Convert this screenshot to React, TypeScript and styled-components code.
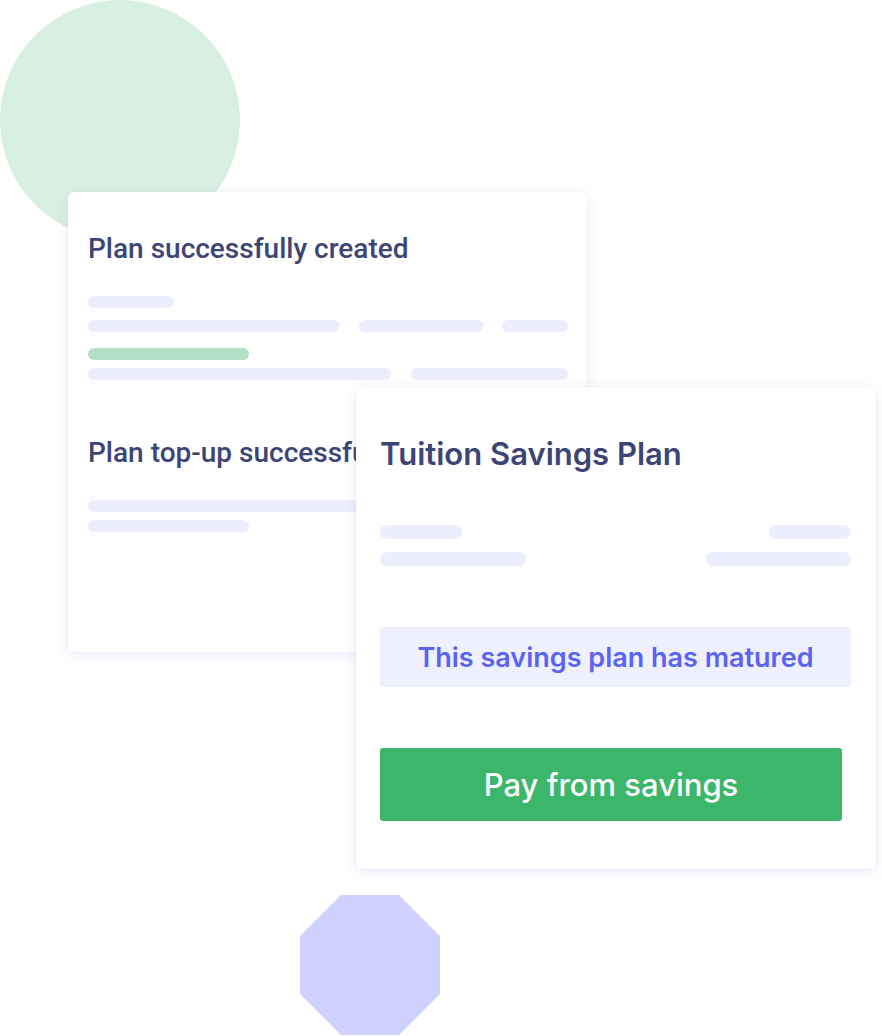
import React from "react";
import styled, { createGlobalStyle } from "styled-components";

const Global = createGlobalStyle`
  html, body { margin: 0; padding: 0; background: #ffffff; }
  * { box-sizing: border-box; }
`;

const Canvas = styled.div`
  position: relative;
  width: 882px;
  height: 1036px;
  overflow: hidden;
  background: #ffffff;
`;

const Circle = styled.div`
  position: absolute;
  left: 0;
  top: 0;
  width: 240px;
  height: 240px;
  border-radius: 50%;
  background: #d8f0e1;
`;

const Octagon = styled.div`
  position: absolute;
  left: 300px;
  top: 895px;
  width: 140px;
  height: 140px;
  background: #d0d1ff;
  clip-path: polygon(29.3% 0, 70.7% 0, 100% 29.3%, 100% 70.7%, 70.7% 100%, 29.3% 100%, 0 70.7%, 0 29.3%);
`;

const Card = styled.div<{ $left: number; $top: number; $w: number; $h: number }>`
  position: absolute;
  left: ${(p) => p.$left}px;
  top: ${(p) => p.$top}px;
  width: ${(p) => p.$w}px;
  height: ${(p) => p.$h}px;
  background: #ffffff;
  border-radius: 6px;
  box-shadow: 0 3px 14px rgba(90, 100, 210, 0.12), 0 0 2px rgba(90, 100, 210, 0.08);
  display: flex;
  flex-direction: column;
`;

const StatusBody = styled.div`
  display: flex;
  flex-direction: column;
  padding: 40px 19px 0 20px;
`;

const StatusTitle = styled.h2<{ $mt?: number; $clip?: number }>`
  margin: ${(p) => p.$mt ?? 0}px 0 0 0;
  font-family: Roboto, "Liberation Sans", sans-serif;
  font-weight: 500;
  font-size: 28px;
  line-height: 34px;
  color: #3c4575;
  white-space: nowrap;
  overflow: hidden;
  max-width: ${(p) => (p.$clip ? `${p.$clip}px` : "none")};
`;

const Bar = styled.div<{ $w: number; $h?: number; $green?: boolean; $mt?: number }>`
  width: ${(p) => p.$w}px;
  height: ${(p) => p.$h ?? 12}px;
  border-radius: ${(p) => (p.$h ?? 12) / 2}px;
  background: ${(p) => (p.$green ? "#b1e1c4" : "#edeefd")};
  margin-top: ${(p) => p.$mt ?? 0}px;
  flex-shrink: 0;
`;

const BarRow = styled.div<{ $mt?: number }>`
  display: flex;
  justify-content: space-between;
  margin-top: ${(p) => p.$mt ?? 0}px;
`;

const PlanBody = styled.div`
  display: flex;
  flex-direction: column;
  padding: 49px 25px 0 24px;
`;

const PlanTitle = styled.h1`
  margin: 0;
  font-family: Inter, Lato, sans-serif;
  font-weight: 600;
  font-size: 31px;
  line-height: 36px;
  color: #3c4575;
`;

const Banner = styled.div`
  margin-top: 61px;
  height: 60px;
  border-radius: 2px;
  background: #eef0fe;
  display: flex;
  align-items: center;
  justify-content: center;
  font-family: Inter, Lato, sans-serif;
  font-weight: 600;
  font-size: 27px;
  color: #5c63f3;
`;

const PayButton = styled.button`
  margin-top: 61px;
  width: 462px;
  height: 73px;
  border: none;
  border-radius: 3px;
  background: #3cb66a;
  color: #ffffff;
  font-family: Inter, Lato, sans-serif;
  font-weight: 500;
  font-size: 31px;
  display: flex;
  align-items: center;
  justify-content: center;
  padding: 0;
`;

export default function App() {
  return (
    <>
      <Global />
      <Canvas>
        <Circle />
        <Octagon />
        <Card $left={68} $top={192} $w={519} $h={460}>
          <StatusBody>
            <StatusTitle>Plan successfully created</StatusTitle>
            <Bar $w={86} $mt={30} />
            <BarRow $mt={12}>
              <Bar $w={252} />
              <Bar $w={125} />
              <Bar $w={66} />
            </BarRow>
            <Bar $w={161} $green $mt={16} />
            <BarRow $mt={8}>
              <Bar $w={303} />
              <Bar $w={157} />
            </BarRow>
            <StatusTitle $mt={56} $clip={268}>Plan top-up successfully made</StatusTitle>
            <Bar $w={380} $mt={30} />
            <Bar $w={161} $mt={8} />
          </StatusBody>
        </Card>
        <Card $left={356} $top={387} $w={520} $h={482}>
          <PlanBody>
            <PlanTitle>Tuition Savings Plan</PlanTitle>
            <BarRow $mt={53}>
              <Bar $w={82} $h={14} />
              <Bar $w={82} $h={14} />
            </BarRow>
            <BarRow $mt={13}>
              <Bar $w={146} $h={14} />
              <Bar $w={145} $h={14} />
            </BarRow>
            <Banner>This savings plan has matured</Banner>
            <PayButton>Pay from savings</PayButton>
          </PlanBody>
        </Card>
      </Canvas>
    </>
  );
}
